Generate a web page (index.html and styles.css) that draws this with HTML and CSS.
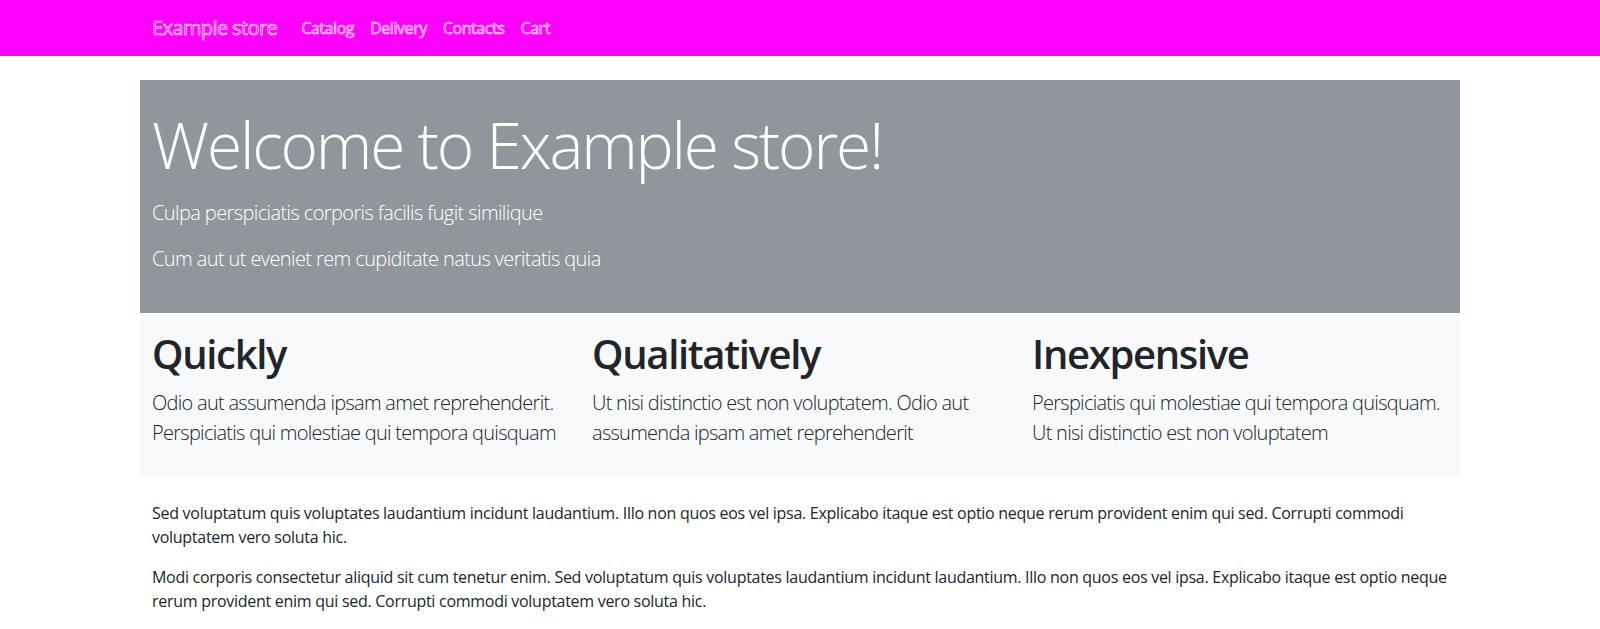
FILE: index.html
```html
<!DOCTYPE html>
<html lang="en">
<head>
<meta charset="utf-8">
<title>Example store</title>
<link rel="stylesheet" href="styles.css">
</head>
<body>
<nav class="navbar">
  <div class="container nav-inner">
    <a class="brand" href="#">Example store</a>
    <ul class="nav">
      <li><a class="nav-link" href="#">Catalog</a></li>
      <li><a class="nav-link" href="#">Delivery</a></li>
      <li><a class="nav-link" href="#">Contacts</a></li>
      <li><a class="nav-link" href="#">Cart</a></li>
    </ul>
  </div>
</nav>
<main class="container main">
  <section class="hero">
    <h1 class="display">Welcome to Example store!</h1>
    <p class="lead">Culpa perspiciatis corporis facilis fugit similique</p>
    <p class="lead">Cum aut ut eveniet rem cupiditate natus veritatis quia</p>
  </section>
  <section class="features">
    <div class="feature">
      <h2>Quickly</h2>
      <p class="lead">Odio aut assumenda ipsam amet reprehenderit. Perspiciatis qui molestiae qui tempora quisquam</p>
    </div>
    <div class="feature">
      <h2>Qualitatively</h2>
      <p class="lead">Ut nisi distinctio est non voluptatem. Odio aut assumenda ipsam amet reprehenderit</p>
    </div>
    <div class="feature">
      <h2>Inexpensive</h2>
      <p class="lead">Perspiciatis qui molestiae qui tempora quisquam. Ut nisi distinctio est non voluptatem</p>
    </div>
  </section>
  <div class="body-text">
    <p>Sed voluptatum quis voluptates laudantium incidunt laudantium. Illo non quos eos vel ipsa. Explicabo itaque est optio neque rerum provident enim qui sed. Corrupti commodi voluptatem vero soluta hic.</p>
    <p>Modi corporis consectetur aliquid sit cum tenetur enim. Sed voluptatum quis voluptates laudantium incidunt laudantium. Illo non quos eos vel ipsa. Explicabo itaque est optio neque rerum provident enim qui sed. Corrupti commodi voluptatem vero soluta hic.</p>
  </div>
</main>
</body>
</html>
```
FILE: styles.css
```css
* { box-sizing: border-box; }
body {
  margin: 0;
  font-family: "Open Sans", "Noto Sans", sans-serif;
  font-size: 16px;
  line-height: 1.5;
  color: #212529;
  background: #fff;
}
.container {
  width: 1320px;
  margin: 0 auto;
}
.navbar {
  background: #ff00ff;
  padding: 8px 0;
}
.nav-inner {
  display: flex;
  align-items: center;
  padding: 0 12px;
}
.brand {
  font-size: 20px;
  line-height: 30px;
  letter-spacing: -0.03em;
  padding: 5px 0;
  margin-right: 16px;
  color: transparent;
  -webkit-text-stroke: 0.6px #ffffff;
  text-decoration: none;
}
.nav {
  display: flex;
  list-style: none;
  margin: 0;
  padding: 0;
}
.nav-link {
  display: block;
  padding: 8px;
  font-size: 16px;
  line-height: 24px;
  letter-spacing: -0.027em;
  color: transparent;
  -webkit-text-stroke: 0.6px #ffffff;
  text-decoration: none;
}
.main {
  margin-top: 24px;
}
.hero {
  background: rgb(145, 150, 157);
  color: #fff;
  padding: 27px 12px 23px;
}
.display {
  font-size: 64px;
  font-weight: 300;
  line-height: 1.2;
  letter-spacing: -0.034em;
  margin: 0 0 14px;
}
.lead {
  font-size: 20px;
  font-weight: 300;
  line-height: 1.5;
  letter-spacing: -0.03em;
  margin: 0 0 16px;
}
.features {
  background: #f8f9fa;
  display: grid;
  grid-template-columns: repeat(3, 1fr);
  padding: 17px 0 0;
}
.feature {
  padding: 0 12px;
}
.feature h2 {
  font-size: 40px;
  font-weight: 600;
  line-height: 1.2;
  letter-spacing: -0.033em;
  margin: 0 0 10px;
}
.feature .lead {
  letter-spacing: -0.036em;
  margin-bottom: 29px;
}
.body-text {
  padding: 24px 12px 0;
  letter-spacing: -0.0175em;
}
.body-text p {
  margin: 0 0 16px;
}
```
